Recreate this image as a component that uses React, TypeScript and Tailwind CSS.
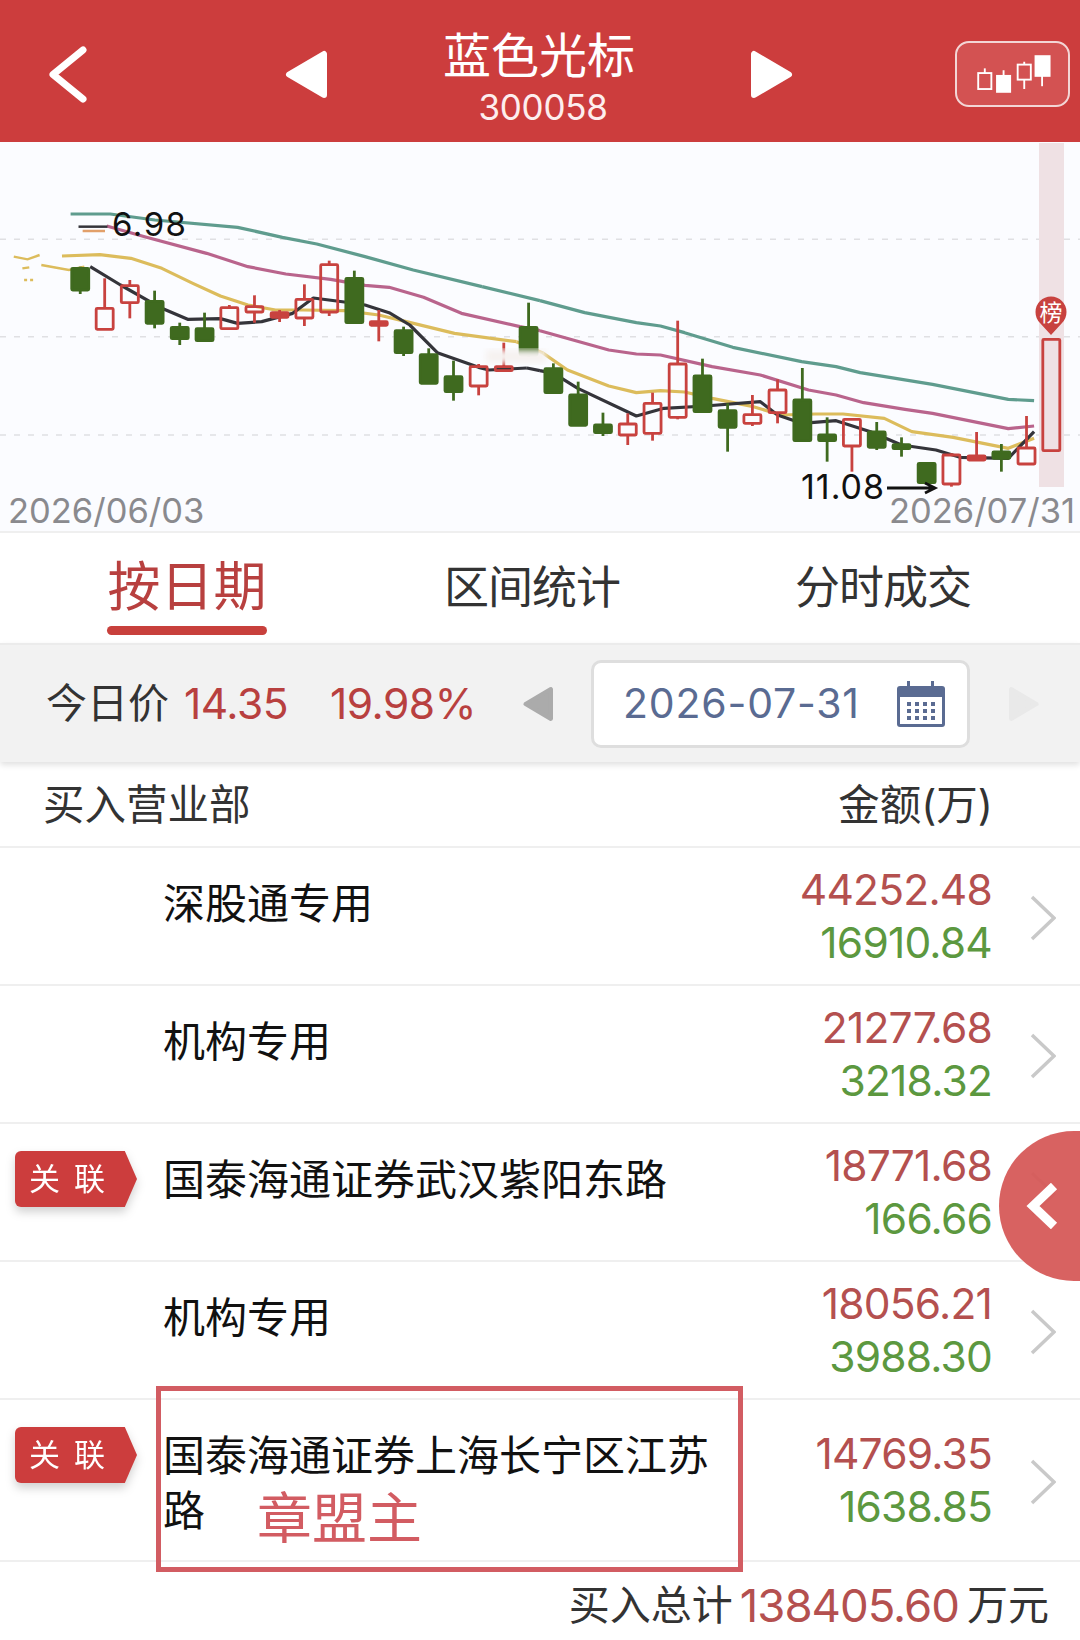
// chart data was read off a 2.904 x 3 crop of the chart, so keep those units and map them here
const px = (x: number) => x / 2.904;
const py = (y: number) => 140 + y / 3;
const RIGHT = 1568; // x offset of the second half of the chart

type Candle = [x: number, wickTop: number, wickBottom: number, top: number, bottom: number, kind: "g" | "r" | "s"];

const CANDLES: Candle[] = [
  [233, 380, 462, 385, 450, "g"],
  [304, 415, 570, 505, 568, "r"],
  [377, 420, 535, 437, 488, "r"],
  [449, 452, 565, 484, 550, "g"],
  [522, 548, 615, 562, 596, "g"],
  [594, 518, 606, 566, 602, "g"],
  [666, 495, 568, 503, 566, "r"],
  [739, 466, 548, 500, 516, "r"],
  [812, 510, 546, 518, 532, "s"],
  [884, 433, 558, 478, 534, "r"],
  [956, 362, 528, 374, 516, "r"],
  [1029, 392, 552, 415, 548, "g"],
  [1100, 510, 604, 545, 556, "s"],
  [1172, 560, 648, 572, 638, "g"],
  [1245, 625, 732, 644, 730, "g"],
  [1317, 662, 782, 710, 755, "g"],
  [1390, 672, 766, 680, 738, "r"],
  [1463, 608, 695, 680, 692, "r"],
  [1535, 488, 650, 562, 645, "g"],
  [RIGHT + 39, 670, 758, 686, 758, "g"],
  [RIGHT + 111, 725, 858, 765, 856, "g"],
  [RIGHT + 183, 818, 888, 855, 878, "g"],
  [RIGHT + 255, 820, 915, 852, 885, "r"],
  [RIGHT + 327, 758, 902, 790, 880, "r"],
  [RIGHT + 400, 542, 838, 672, 832, "r"],
  [RIGHT + 472, 656, 815, 708, 815, "g"],
  [RIGHT + 545, 790, 935, 812, 862, "g"],
  [RIGHT + 617, 765, 858, 824, 850, "r"],
  [RIGHT + 690, 718, 850, 750, 818, "r"],
  [RIGHT + 762, 684, 902, 780, 902, "g"],
  [RIGHT + 834, 832, 965, 885, 902, "g"],
  [RIGHT + 906, 838, 995, 838, 918, "r"],
  [RIGHT + 978, 846, 930, 876, 922, "g"],
  [RIGHT + 1050, 892, 950, 914, 926, "g"],
  [RIGHT + 1123, 968, 1030, 970, 1028, "g"],
  [RIGHT + 1195, 940, 1040, 945, 1032, "r"],
  [RIGHT + 1268, 876, 962, 948, 960, "s"],
  [RIGHT + 1340, 912, 995, 936, 955, "g"],
  [RIGHT + 1413, 828, 972, 924, 972, "r"],
  [RIGHT + 1485, 598, 932, 598, 932, "r"],
];

const LINES: { color: string; left: number[]; right: number[] }[] = [
  {
    color: "#5f9c8e",
    left: [205, 222, 320, 222, 450, 240, 690, 262, 820, 292, 920, 312, 1060, 350, 1200, 390, 1400, 440],
    right: [0, 482, 130, 518, 280, 548, 350, 558, 420, 578, 560, 622, 760, 665, 860, 680, 930, 698, 1140, 733, 1360, 778, 1435, 782],
  },
  {
    color: "#b9648c",
    left: [310, 258, 420, 290, 600, 340, 720, 380, 830, 402, 960, 418, 1060, 436, 1130, 442, 1230, 472, 1340, 520, 1510, 560],
    right: [0, 572, 200, 630, 280, 642, 350, 645, 500, 680, 640, 705, 780, 750, 860, 765, 940, 788, 1060, 808, 1140, 820, 1360, 866, 1435, 858],
  },
  {
    color: "#dcbc5c",
    left: [180, 348, 290, 344, 380, 355, 470, 385, 560, 430, 640, 468, 720, 495, 800, 510, 880, 510, 1000, 512, 1100, 525, 1180, 545, 1320, 580, 1500, 605],
    right: [10, 640, 80, 690, 200, 738, 280, 758, 350, 752, 420, 756, 500, 775, 620, 800, 700, 825, 800, 822, 880, 822, 1000, 835, 1080, 875, 1200, 892, 1360, 925, 1435, 895],
  },
  {
    color: "#34343a",
    left: [262, 380, 350, 435, 470, 505, 545, 538, 640, 536, 690, 550, 760, 545, 850, 520, 910, 474, 1000, 486, 1060, 495, 1130, 518, 1190, 555, 1270, 638, 1390, 682, 1420, 690, 1530, 684],
    right: [0, 692, 40, 700, 110, 745, 280, 828, 360, 805, 480, 798, 640, 785, 690, 825, 760, 850, 860, 842, 960, 875, 1050, 915, 1150, 930, 1220, 952, 1360, 955, 1435, 875],
  },
];

const ROWS = [
  { name: "深股通专用", buy: "44252.48", sell: "16910.84" },
  { name: "机构专用", buy: "21277.68", sell: "3218.32" },
  { name: "国泰海通证券武汉紫阳东路", buy: "18771.68", sell: "166.66", tag: true },
  { name: "机构专用", buy: "18056.21", sell: "3988.30" },
  { name: "国泰海通证券上海长宁区江苏路", buy: "14769.35", sell: "1638.85", tag: true, tall: true },
];

function toPoints(values: number[], offset = 0) {
  const out: string[] = [];
  for (let i = 0; i < values.length; i += 2) {
    out.push(`${px(values[i] + offset)},${py(values[i + 1])}`);
  }
  return out.join(" ");
}

function KChart() {
  const RED = "#c8423f";
  const GREEN = "#3f6a1f";
  return (
    <svg viewBox="0 142 1080 389" className="block w-full h-full">
      <defs>
        <filter id="smudge">
          <feGaussianBlur stdDeviation="3" />
        </filter>
      </defs>
      {[298, 590, 885].map((y) => (
        <line key={y} x1="0" x2="1080" y1={py(y)} y2={py(y)} stroke="#e0e0e3" strokeWidth="1.5" strokeDasharray="6 8" />
      ))}
      <rect x="1039" y="143" width="25" height="344" fill="#efe1e4" />

      {LINES.map((l) => (
        <g key={l.color} fill="none" stroke={l.color} strokeWidth="3.2" strokeLinejoin="round">
          <polyline points={toPoints(l.left)} />
          <polyline points={toPoints(l.right, RIGHT)} />
          <polyline points={`${px(l.left[l.left.length - 2])},${py(l.left[l.left.length - 1])} ${px(RIGHT + l.right[0])},${py(l.right[1])}`} />
        </g>
      ))}

      {/* washed out bits at the left edge of the chart */}
      <g fill="none" stroke="#dcbc5c" strokeWidth="2.4">
        <polyline points={toPoints([40, 350, 80, 358, 115, 345])} />
        <polyline points={toPoints([120, 375, 200, 390, 245, 380])} />
        <polyline points={toPoints([65, 385, 85, 382])} />
        <polyline points={toPoints([70, 420, 100, 420])} strokeDasharray="3 3" />
      </g>
      <line x1={px(228)} x2={px(312)} y1={py(260)} y2={py(260)} stroke="#34343a" strokeWidth="2.5" />
      <line x1={px(240)} x2={px(305)} y1={py(273)} y2={py(273)} stroke="#e2a06a" strokeWidth="2.5" />

      {CANDLES.map(([x, wt, wb, t, b, kind]) => {
        const color = kind === "g" ? GREEN : RED;
        const cx = px(x);
        return (
          <g key={x} stroke={color} strokeWidth="2.8">
            <line x1={cx} x2={cx} y1={py(wt)} y2={py(t)} />
            <line x1={cx} x2={cx} y1={py(b)} y2={py(wb)} />
            <rect
              x={cx - 8.5}
              y={py(t)}
              width="17"
              height={py(b) - py(t)}
              rx="1"
              fill={kind === "r" ? "none" : color}
            />
          </g>
        );
      })}

      <rect x="486" y="350" width="60" height="13" fill="#f6f2f0" filter="url(#smudge)" />

      <path d="M1051 335 L1040 323 A15.5 15.5 0 1 1 1062 323 Z" fill="#c8423f" />
      <text x="1051" y="321" textAnchor="middle" fill="#fff" fontSize="23">榜</text>

      <path d="M887 488 H934 M925 483 L935 488 L925 493" fill="none" stroke="#111" strokeWidth="2.8" />
    </svg>
  );
}

function Triangle({ dir, color, className }: { dir: "l" | "r"; color: string; className: string }) {
  return (
    <svg viewBox="0 0 43 49" className={className}>
      <polygon
        points={dir === "l" ? "5,24.5 40,4 40,45" : "38,24.5 3,4 3,45"}
        fill={color}
        stroke={color}
        strokeWidth="6"
        strokeLinejoin="round"
      />
    </svg>
  );
}

function CandleIcon() {
  return (
    <svg viewBox="0 0 115 66" className="w-full h-full" fill="none" stroke="#fff" strokeWidth="2">
      <rect x="21" y="32" width="14" height="17" />
      <path d="M28 27V32" />
      <rect x="41" y="35" width="14" height="17" fill="#fff" />
      <path d="M48 29V35" />
      <rect x="63" y="23" width="14" height="16" />
      <path d="M70 20V23M70 39V49" />
      <rect x="82" y="14" width="15" height="21" fill="#fff" />
      <path d="M89 35V46" />
    </svg>
  );
}

function CalendarIcon() {
  const dots = [12, 20, 28, 36];
  return (
    <svg viewBox="0 0 48 46" className="w-[48px] h-[46px]">
      <rect x="0" y="5" width="48" height="41" rx="3" fill="#5a6b92" />
      <rect x="3" y="16" width="42" height="27" fill="#fff" />
      <rect x="10" y="0" width="3" height="11" fill="#5a6b92" />
      <rect x="34" y="0" width="3" height="11" fill="#5a6b92" />
      {[21, 28, 35].flatMap((y) =>
        dots.map((x) => <rect key={`${x}-${y}`} x={x - 2} y={y} width="4" height="4" fill="#5a6b92" />)
      )}
    </svg>
  );
}

function Tag() {
  return (
    <div className="w-[122px] h-[56px] [filter:drop-shadow(0_5px_5px_rgba(0,0,0,0.18))]">
      <div className="w-full h-full bg-[#cc3d3d] rounded-l-md pl-[14px] flex items-center text-[31px] text-white [clip-path:polygon(0_0,90%_0,100%_50%,90%_100%,0_100%)]">
        <span>关</span>
        <span className="ml-[14px]">联</span>
      </div>
    </div>
  );
}

function Row({ row }: { row: (typeof ROWS)[number] }) {
  return (
    <div className={`flex border-b-2 border-[#efefef] ${row.tall ? "h-[162px]" : "h-[138px]"}`}>
      <div className="w-[163px] shrink-0 pl-[15px] pt-[27px]">{row.tag && <Tag />}</div>
      <div className="w-[560px] shrink-0 pt-[28px] text-[42px] leading-[55px] text-[#111]">{row.name}</div>
      <div className="flex-1 flex flex-col justify-center items-end text-[42.5px] leading-[53px] tracking-[-0.8px]">
        <span className="text-[#b4504f]">{row.buy}</span>
        <span className="text-[#5c983f]">{row.sell}</span>
      </div>
      <div className="w-[88px] shrink-0 flex items-center pl-[38px] pt-[3px]">
        <svg viewBox="0 0 26 46" className="w-[26px] h-[46px]" fill="none" stroke="#c9c9c9" strokeWidth="3.5">
          <path d="M2 2 L24 23 L2 44" />
        </svg>
      </div>
    </div>
  );
}

export default function App() {
  return (
    <div className="relative w-[1080px] h-[1640px] overflow-hidden bg-white font-['Inter','Noto_Sans_CJK_SC',sans-serif]">
      <header className="h-[142px] bg-[#cc3d3d] flex items-center text-white">
        <svg viewBox="0 0 38 57" className="ml-[47px] w-[40px] h-[57px] shrink-0 mt-[7px]" fill="none" stroke="#fff" strokeWidth="7" strokeLinecap="round" strokeLinejoin="round">
          <path d="M35 4 L5 28.5 L35 53" />
        </svg>
        <Triangle dir="l" color="#fff" className="ml-[197px] w-[43px] h-[49px] shrink-0 mt-[7px]" />
        <div className="w-[424px] shrink-0 text-center pt-[14px]">
          <div className="text-[48px] leading-[54px]">蓝色光标</div>
          <div className="text-[35px] leading-[42px] mt-[3px] pl-[8px] tracking-[-0.3px] text-[#fdeeee]">300058</div>
        </div>
        <Triangle dir="r" color="#fff" className="w-[43px] h-[49px] shrink-0 mt-[7px]" />
        <div className="ml-[161px] w-[115px] h-[66px] mt-[6px] shrink-0 rounded-[14px] border-2 border-[#f3d6d6] bg-[#d35252]">
          <CandleIcon />
        </div>
      </header>

      <section className="relative h-[389px] bg-[#fbfcff]">
        <KChart />
        <span className="absolute left-[112px] top-[62px] text-[33px] leading-[40px] tracking-[1.5px] text-[#111]">6.98</span>
        <span className="absolute left-[801px] top-[325px] text-[34px] leading-[40px] tracking-[1px] text-[#111]">11.08</span>
        <span className="absolute left-[8px] top-[348px] text-[34.5px] leading-[42px] text-[#8a8a8e]">2026/06/03</span>
        <span className="absolute right-[5px] top-[348px] text-[34.5px] leading-[42px] text-[#8a8a8e]">2026/07/31</span>
      </section>

      <nav className="h-[112px] border-t-2 border-[#efefef] flex text-[45px] text-[#333]">
        <div className="ml-[107px] w-[160px] flex flex-col items-center">
          <span className="mt-[28px] text-[53px] leading-[52px] text-[#b8403f]">按日期</span>
          <span className="mt-[13px] w-full h-[9px] rounded-md bg-[#c8403c]" />
        </div>
        <span className="ml-[177px] mt-[30px] leading-[50px] tracking-[-1px]">区间统计</span>
        <span className="ml-[175px] mt-[30px] leading-[50px] tracking-[-1px]">分时成交</span>
      </nav>

      <div className="h-[119px] bg-[#f2f2f2] border-t-2 border-[#ebebeb] flex items-center shadow-[0_3px_6px_rgba(0,0,0,0.12)] relative">
        <span className="ml-[46px] w-[138px] shrink-0 text-[41px] text-[#333]">今日价</span>
        <span className="w-[146px] shrink-0 text-[42.5px] tracking-[-0.5px] text-[#b8403f]">14.35</span>
        <span className="w-[192px] shrink-0 text-[42.5px] tracking-[-0.5px] text-[#b8403f]">19.98%</span>
        <Triangle dir="l" color="#ababab" className="w-[31px] h-[40px] shrink-0" />
        <div className="ml-[38px] w-[379px] h-[88px] shrink-0 rounded-[10px] border-[3px] border-[#dedede] bg-white flex items-center pl-[29px]">
          <span className="w-[274px] text-[41px] tracking-[0.8px] text-[#5a6b92]">2026-07-31</span>
          <CalendarIcon />
        </div>
        <Triangle dir="r" color="#e9e9e9" className="ml-[39px] w-[31px] h-[40px] shrink-0" />
      </div>

      <div className="h-[86px] border-b-2 border-[#efefef] flex items-center justify-between pl-[43px] pr-[87px] pt-[3px] text-[41.5px] text-[#333]">
        <span>买入营业部</span>
        <span>金额(万)</span>
      </div>

      {ROWS.map((row, i) => (
        <Row key={i} row={row} />
      ))}

      <div className="h-[79px] flex items-center justify-end pr-[31px] pt-[9px] text-[41px] text-[#333]">
        <span>买入总计</span>
        <span className="ml-[7px] mr-[8px] text-[45.5px] tracking-[-1px] text-[#b4504f]">138405.60</span>
        <span>万元</span>
      </div>

      {/* annotation box drawn over the last row */}
      <div className="absolute left-[156px] top-[1386px] w-[587px] h-[186px] border-[5px] border-[#d25c62]" />
      <span className="absolute left-[257px] top-[1486px] text-[55px] leading-[64px] text-[#d25c62]">章盟主</span>

      {/* floating collapse handle */}
      <div className="absolute right-0 top-[1131px] w-[81px] h-[150px] rounded-l-[80px] bg-[#d65a58]/95 flex items-center pl-[27px]">
        <svg viewBox="0 0 32 46" className="w-[32px] h-[46px]" fill="none" stroke="#fff" strokeWidth="9" strokeLinejoin="miter">
          <path d="M28 3 L7 23 L28 43" />
        </svg>
      </div>
    </div>
  );
}
